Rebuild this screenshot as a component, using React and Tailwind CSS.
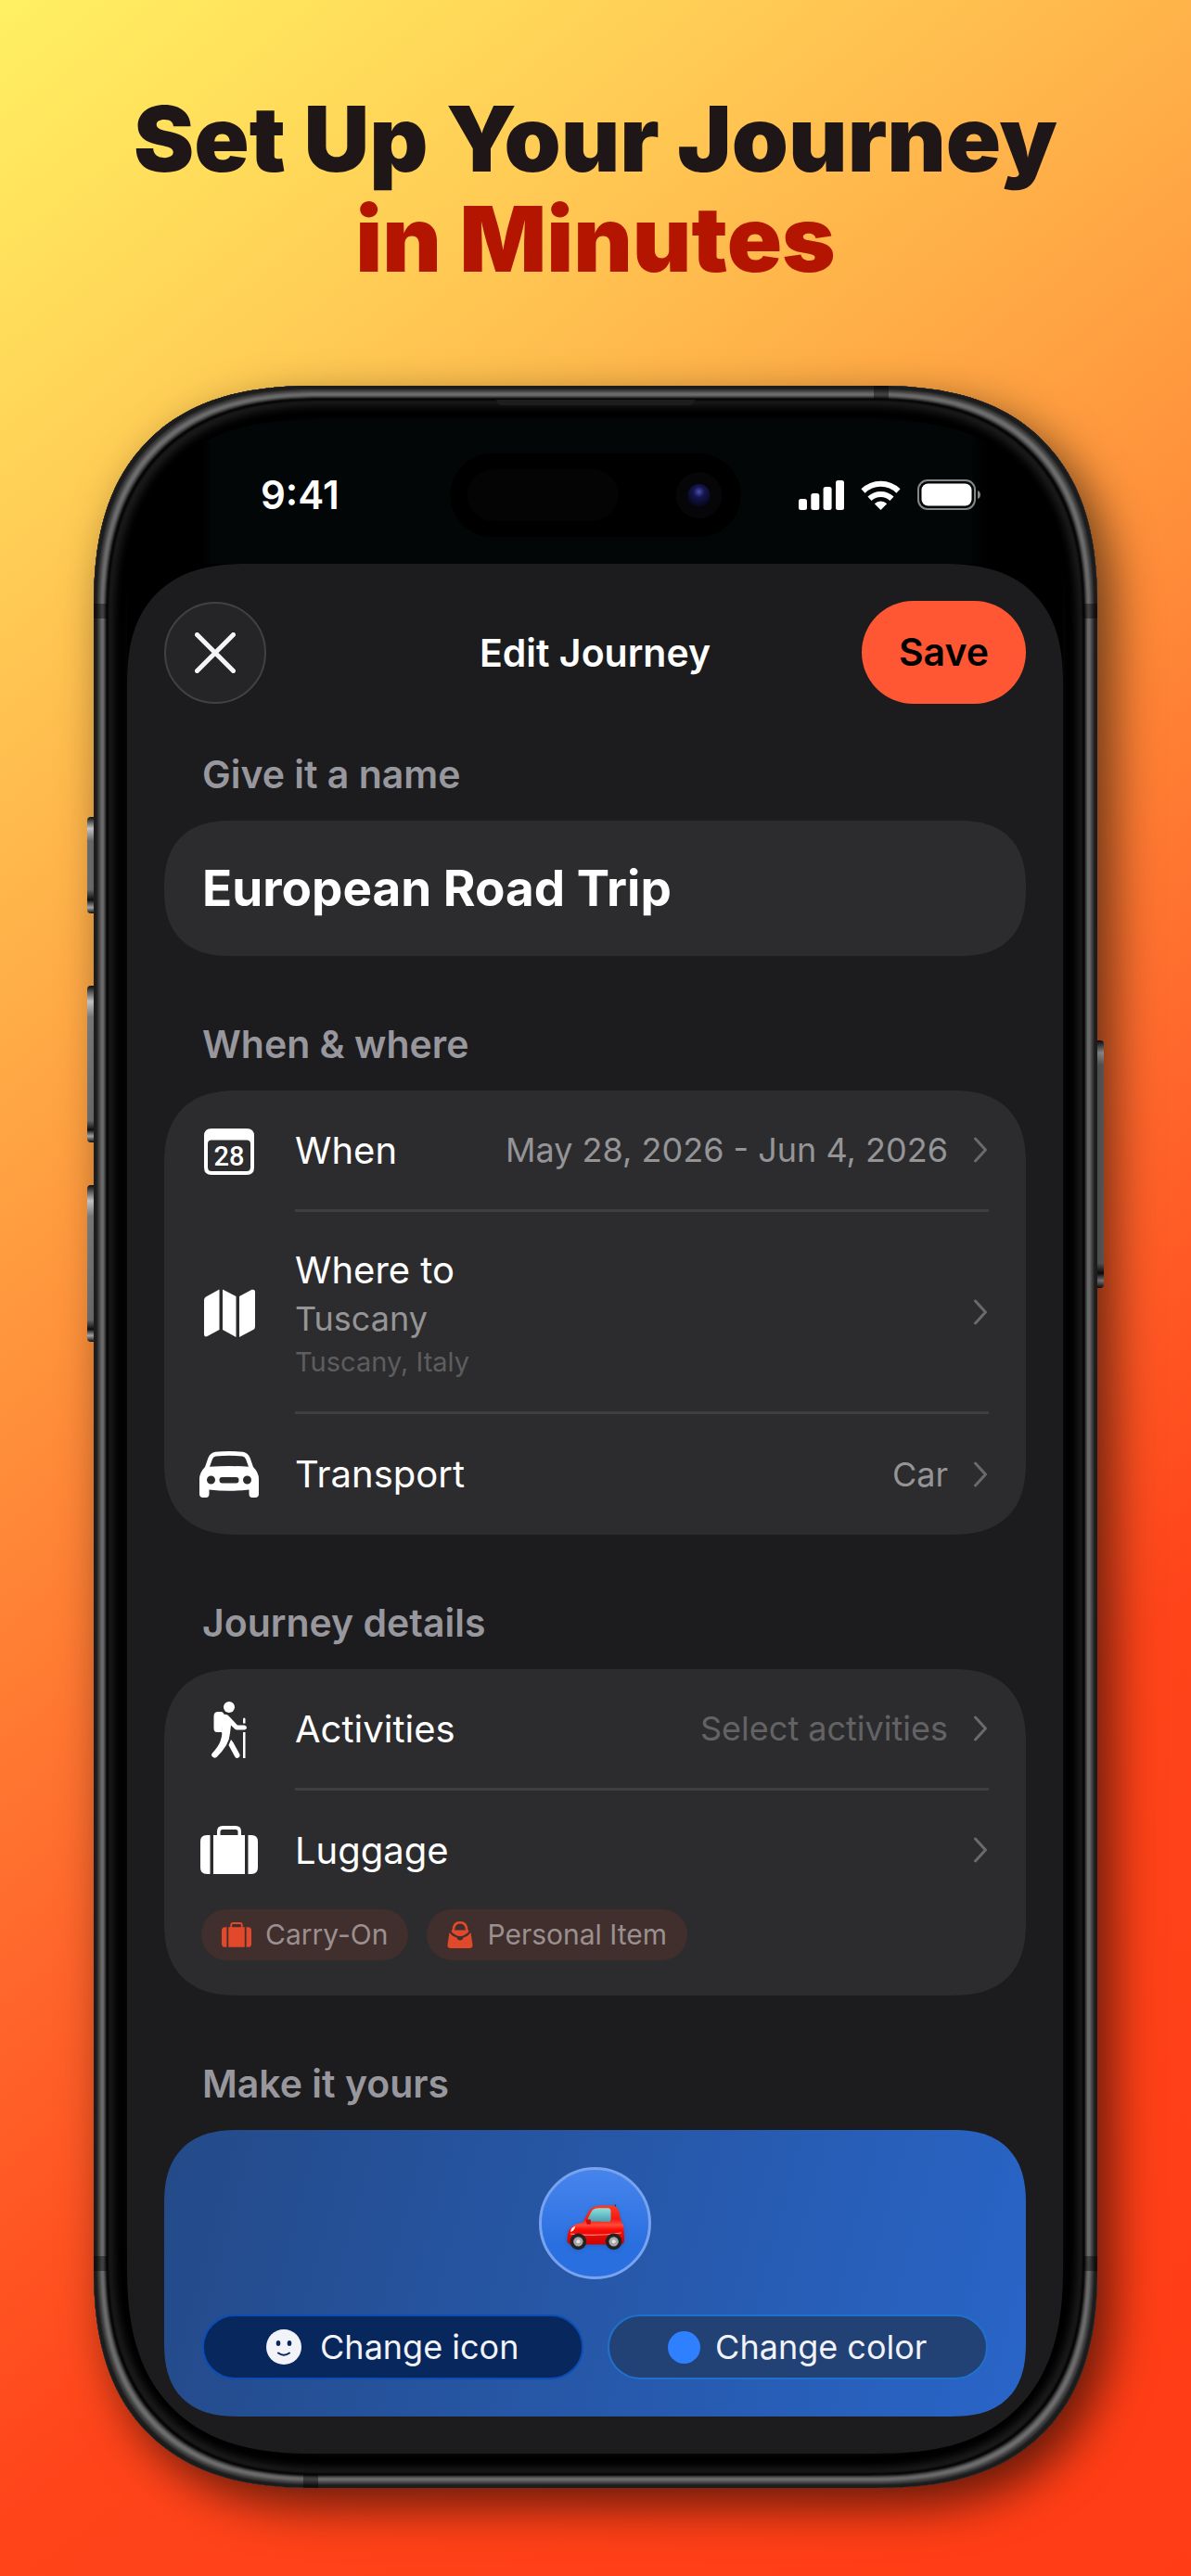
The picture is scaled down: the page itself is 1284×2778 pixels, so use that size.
const chevron = (
  <svg viewBox="0 0 16 28" className="h-7 w-4 shrink-0 text-[#6a6a6d]" fill="none" stroke="currentColor" strokeWidth="3" strokeLinecap="round" strokeLinejoin="round" aria-hidden="true">
    <path d="M1.5 2 L12.5 14 L1.5 26" />
  </svg>
);

function CalendarIcon() {
  return (
    <svg viewBox="0 0 54 50" className="w-[54px]" aria-hidden="true">
      <path fill="#fff" fillRule="evenodd" d="M8 0H46Q54 0 54 8V42Q54 50 46 50H8Q0 50 0 42V8Q0 0 8 0ZM8 12.500Q4 12.500 4 16.500V41.500Q4 46 8 46H46Q50 46 50 41.500V16.500Q50 12.500 46 12.500Z" />
      <text x="27" y="40" textAnchor="middle" fontSize="29" fontWeight="500" fill="#fff" className="font-[Roboto,sans-serif]">28</text>
    </svg>
  );
}

function MapIcon() {
  return (
    <svg viewBox="0 0 55 52" className="w-[55px]" fill="#fff" aria-hidden="true">
      <path d="M16.500 .5V44L3.500 51Q0 52.500 0 49V12Q0 9.500 2 8.500Z" />
      <path d="M20 .5L34.500 8V52L20 44Z" />
      <path d="M38 8L51.500 .8Q55 0 55 3.500V40.500Q55 43 53 44L38 52Z" />
    </svg>
  );
}

function CarIcon() {
  return (
    <svg viewBox="0 0 64 50" className="w-16" aria-hidden="true">
      <path fill="#fff" fillRule="evenodd" d="M17 .8Q32 -.6 47 .8Q52 1.500 54.500 7L58 17Q64 23 64 30V46Q64 50 60 50H57Q53.500 50 53.500 46V41.500Q32 44 10.500 41.500V46Q10.500 50 7 50H4Q0 50 0 46V30Q0 23 6 17L9.500 7Q12 1.500 17 .8ZM17.500 5.500Q15 5.800 14 8.500L11 16.800Q32 15.200 53 16.800L50 8.500Q49 5.800 46.500 5.500Q32 4 17.500 5.500ZM12.500 26.500A4.500 4.500 0 1 0 12.500 35.500A4.500 4.500 0 1 0 12.500 26.500ZM51.500 26.500A4.500 4.500 0 1 0 51.500 35.500A4.500 4.500 0 1 0 51.500 26.500ZM24.500 28Q21.500 28 21.500 31Q21.500 34.500 24.500 34.500H39.500Q42.500 34.500 42.500 31Q42.500 28 39.500 28Z" />
    </svg>
  );
}

function HikerIcon() {
  return (
    <svg viewBox="0 0 38 61" className="w-[38px]" aria-hidden="true">
      <g fill="#fff">
        <circle cx="19" cy="6" r="6" />
        <path d="M7 11H10Q13 11 14 15L11 33H6Q2.500 33 2.500 29V16Q2.500 11 7 11Z" />
        <path d="M13 14Q17 13 20 17L28 25.500H35.500Q38 26 38 28T35.500 30.500H27.500Q26 30.500 25 29.500L21 25.500L20 34Q19.500 41 16 47Q11 55 5.500 60Q3 61.500 1 59.500T1 55.500Q7 49 9.500 43Q12 36 11 33L12 16Z" />
        <path d="M21 41Q23 43 25 47L30.500 57Q31 60 28.500 60.800T25 59L18.500 47Z" />
        <path d="M34 19Q34 17.500 35.300 17.500T36.500 19V23.500H34ZM34 33H36.500V61H34Z" />
      </g>
    </svg>
  );
}

function SuitcaseIcon({ className }) {
  return (
    <svg viewBox="0 0 62 52" className={className} fill="currentColor" aria-hidden="true">
      <path d="M7 10H10.500V52H7Q0 52 0 45V17Q0 10 7 10Z" />
      <path d="M55 10H51.500V52H55Q62 52 62 45V17Q62 10 55 10Z" />
      <path fillRule="evenodd" d="M14 10H18V6Q18 0 24 0H38Q44 0 44 6V10H48V52H14ZM21.500 10H40.500V6.500Q40.500 4 38 4H24Q21.500 4 21.500 6.500Z" />
    </svg>
  );
}

function HandbagIcon() {
  return (
    <svg viewBox="0 0 28 29" className="w-7 text-[#e2492b]" fill="currentColor" aria-hidden="true">
      <path fillRule="evenodd" d="M5.500 9Q6 0 14 0T22.500 9L23.500 11Q19 16 14 16T4.500 11ZM8 9.500H20Q19.500 2.500 14 2.500T8 9.500Z" />
      <path d="M2.500 12Q6 16.500 10.500 17.500Q11 20.500 14 20.500T17.500 17.500Q22 16.500 25.500 12L27.500 25Q28 29 24 29H4Q0 29 .5 25Z" />
    </svg>
  );
}

function SmileIcon() {
  return (
    <svg viewBox="0 0 38 38" className="w-[38px]" aria-hidden="true">
      <circle cx="19" cy="19" r="19" fill="#f2f3f8" />
      <ellipse cx="13" cy="15" rx="2.300" ry="3" fill="#08265a" />
      <ellipse cx="25" cy="15" rx="2.300" ry="3" fill="#08265a" />
      <path d="M13 25.500Q19 30 25 25.500" stroke="#08265a" strokeWidth="2" strokeLinecap="round" fill="none" />
    </svg>
  );
}

function RedCar() {
  return (
    <svg viewBox="0 0 60 48" className="mt-2 w-[62px] drop-shadow-sm" aria-hidden="true">
      <defs>
        <linearGradient id="body" x1="0" y1="0" x2="0" y2="1">
          <stop offset="0" stopColor="#ff3b22" />
          <stop offset=".35" stopColor="#f5180f" />
          <stop offset=".5" stopColor="#ff4a3c" />
          <stop offset=".62" stopColor="#fb0d08" />
          <stop offset="1" stopColor="#c90303" />
        </linearGradient>
        <linearGradient id="glass" x1="0" y1="0" x2="0" y2="1">
          <stop offset="0" stopColor="#8fe0dc" />
          <stop offset="1" stopColor="#4a9db0" />
        </linearGradient>
      </defs>
      <path d="M49 5L51 .5" stroke="#333" strokeWidth="1.200" />
      <path fill="url(#body)" d="M4 25Q8 20 17 19L22 9Q26 2 34 1.500H47Q53 2 54.500 8L57 19Q60 21 59.500 27L60 34V39Q59 42 56 42H4Q0 41 .5 36Q1 28 4 25Z" />
      <path fill="url(#glass)" d="M21 18Q24 10 27 6Q29 4 33 4H43Q46 4 46 8V16Q46 18.500 44 18.500Z" />
      <path d="M4 31Q30 34 57 30" stroke="#ff8678" strokeWidth="1.200" fill="none" />
      <path d="M4 28Q5 24 9 23Q8 28 4 29Z" fill="#ffe9e4" />
      <path d="M20 16H25V21H21Z" fill="#c80a08" />
      <g>
        <circle cx="12" cy="39" r="8.500" fill="#222" />
        <circle cx="12" cy="39" r="5" fill="#a9a9a9" />
        <circle cx="12" cy="39" r="2" fill="#e4e4e4" />
        <circle cx="49" cy="39" r="8.500" fill="#222" />
        <circle cx="49" cy="39" r="5" fill="#a9a9a9" />
        <circle cx="49" cy="39" r="2" fill="#e4e4e4" />
      </g>
    </svg>
  );
}

function StatusBar() {
  return (
    <div className="relative flex h-[155px] items-center justify-between bg-[linear-gradient(90deg,#000_8%,#020606_9%,#020606_90%,#000_92%)] pr-[88px] pl-36">
      <div className="pt-1.5 text-[42px] leading-none font-semibold">9:41</div>
      <div className="absolute top-9 left-1/2 flex h-[90px] w-[313px] -translate-x-1/2 items-center justify-between rounded-full bg-black pr-5 pl-[18px]">
        <div className="h-14 w-[163px] rounded-full bg-[#040404]" />
        <div className="flex size-[50px] items-center justify-center rounded-full bg-[#060508]">
          <div className="size-6 rounded-full bg-[radial-gradient(circle_at_50%_35%,#4a4fa8_0%,#15164e_30%,#0a0b2a_65%,#05050f_100%)]" />
        </div>
      </div>
      <div className="flex items-center gap-[18px] pt-1.5">
        <svg viewBox="0 0 49 32" className="w-[49px]" fill="#fff" aria-label="Signal">
          <rect x="0" y="20" width="9" height="12" rx="2.500" />
          <rect x="13.300" y="14" width="9" height="18" rx="2.500" />
          <rect x="26.600" y="7" width="9" height="25" rx="2.500" />
          <rect x="40" y="0" width="9" height="32" rx="2.500" />
        </svg>
        <svg viewBox="0 0 43 32" className="w-[43px]" fill="none" stroke="#fff" strokeWidth="6" aria-label="Wi-Fi">
          <path d="M2.500 11.500A27 27 0 0 1 40.500 11.500" />
          <path d="M9.500 19.800A17.500 17.500 0 0 1 33.500 19.800" />
          <path d="M21.500 32L14.800 25.200A9.500 9.500 0 0 1 28.200 25.200Z" fill="#fff" stroke="none" />
        </svg>
        <svg viewBox="0 0 69 33" className="w-[69px]" aria-label="Battery">
          <rect x="1" y="1" width="61" height="31" rx="10" fill="none" stroke="#848687" strokeWidth="2" />
          <rect x="4.500" y="4.500" width="54" height="24" rx="7" fill="#fff" />
          <path d="M65 12Q68 13 68 16.500T65 21Z" fill="#848687" />
        </svg>
      </div>
    </div>
  );
}

function SectionTitle({ children, className = "" }) {
  return <h2 className={`px-[41px] text-[41px] leading-[48px] font-semibold text-[#98979e] ${className}`}>{children}</h2>;
}

function Card({ children, className = "" }) {
  return (
    <section className={`mt-[26px] rounded-[68px] supports-[corner-shape:squircle]:rounded-[80px] supports-[corner-shape:squircle]:[corner-shape:superellipse(1.3)] ${className}`}>
      {children}
    </section>
  );
}

function Row({ icon, label, value, muted, children, last, spacing = "pt-10 pb-[38px]" }) {
  return (
    <button type="button" className="flex w-full items-stretch pr-10 pl-[29px] text-left">
      <span className="flex w-[82px] shrink-0 items-center justify-center">{icon}</span>
      <span className={`ml-[30px] flex min-w-0 flex-1 items-center justify-between ${last ? "" : "border-b-3 border-[#3f3f42]"}`}>
        <span className={`flex flex-col text-[40px] leading-[50px] ${spacing}`}>
          {label}
          {children}
        </span>
        <span className="flex items-center gap-7">
          {value && <span className={muted ? "text-[36px] text-[#636365]" : "text-[36px] text-[#959597]"}>{value}</span>}
          {chevron}
        </span>
      </span>
    </button>
  );
}

function Chip({ icon, children }) {
  return (
    <span className="flex h-[55px] items-center gap-[15px] rounded-full bg-[#402f2d] px-[22px] text-[30px] text-[#9b908f]">
      {icon}
      {children}
    </span>
  );
}

function Phone({ children }) {
  return (
    <div className="relative mx-auto w-full max-w-[1082px]">
      <div className="absolute top-[465px] -left-[7px] h-[104px] w-2 rounded-l-sm bg-[linear-gradient(#111,#ddd_12%,#777_25%,#777_75%,#111_86%,#bbb_94%,#111)]" />
      <div className="absolute top-[647px] -left-[7px] h-[169px] w-2 rounded-l-sm bg-[linear-gradient(#111,#ddd_10%,#888_20%,#777_86%,#111_92%,#bbb_96%,#111)]" />
      <div className="absolute top-[862px] -left-[7px] h-[169px] w-2 rounded-l-sm bg-[linear-gradient(#111,#ddd_10%,#888_20%,#777_86%,#111_92%,#bbb_96%,#111)]" />
      <div className="absolute top-[706px] -right-[7px] h-[267px] w-2 rounded-r-sm bg-[linear-gradient(#111,#ddd_5%,#888_10%,#888_90%,#111_94%,#bbb_97%,#111)]" />
      <div className="relative rounded-[202px] bg-[#1c1c1c] py-[37px] pr-[37px] pl-9 shadow-[16px_20px_50px_rgba(0,0,0,0.6),inset_0_0_2px_4px_#1c1c1c,inset_0_0_3px_7px_#3c3c3c,inset_0_0_2px_11px_#707070,inset_0_0_2px_13px_#444,inset_0_0_2px_16px_#050505,inset_0_0_8px_22px_#1c1c1c,inset_0_0_8px_40px_#000] supports-[corner-shape:squircle]:rounded-[240px] supports-[corner-shape:squircle]:[corner-shape:superellipse(1.3)]">
        <div className="absolute top-[15px] left-1/2 h-1.5 w-[214px] -translate-x-1/2 rounded-b-md bg-[#1d1d1d]" />
        <div className="absolute top-0 right-[225px] h-[15px] w-4 bg-black/40" />
        <div className="absolute bottom-0 left-[226px] h-[15px] w-4 bg-black/40" />
        <div className="absolute top-[235px] left-0 h-4 w-[15px] bg-black/40" />
        <div className="absolute top-[235px] right-0 h-4 w-[15px] bg-black/40" />
        <div className="absolute bottom-[234px] left-0 h-4 w-[15px] bg-black/40" />
        <div className="absolute right-0 bottom-[234px] h-4 w-[15px] bg-black/40" />
        <div className="relative overflow-hidden rounded-[166px] bg-black supports-[corner-shape:squircle]:rounded-[200px] supports-[corner-shape:squircle]:[corner-shape:superellipse(1.3)]">{children}</div>
      </div>
    </div>
  );
}

export default function App() {
  return (
    <main className="min-h-screen overflow-hidden bg-[linear-gradient(142deg,#fff062_0%,#ffdb5a_10%,#ffc652_19%,#ff943c_39%,#ff662b_57%,#ff441a_72%,#ff3c15_100%)] px-[101px] pb-[95px] font-[Inter,'Liberation_Sans',sans-serif] text-white">
      <h1 className="-mx-12 flex h-[416px] flex-col items-center pt-24 text-[98px] leading-[108px] font-black whitespace-nowrap text-[#1e1617]">
        <span>Set Up Your Journey</span>
        <span className="text-[#b41500]">in Minutes</span>
      </h1>

      <Phone>
        <StatusBar />
        <div className="rounded-t-[112px] bg-[#1c1c1e] p-10 supports-[corner-shape:squircle]:rounded-t-[130px] supports-[corner-shape:squircle]:[corner-shape:superellipse(1.3)]">
          <header className="grid grid-cols-[1fr_auto_1fr] items-center">
            <button type="button" aria-label="Close" className="flex size-[110px] items-center justify-center rounded-full border-2 border-[#414144] bg-[#252527]">
              <svg viewBox="0 0 44 44" className="w-11" stroke="#f5f5f7" strokeWidth="5" strokeLinecap="round" aria-hidden="true">
                <path d="M2.500 2.500L41.500 41.500M41.500 2.500L2.500 41.500" />
              </svg>
            </button>
            <h2 className="text-[41px] leading-[48px] font-semibold">Edit Journey</h2>
            <button type="button" className="h-[111px] w-[177px] justify-self-end rounded-full bg-[#ff5733] text-[41px] font-semibold text-black">Save</button>
          </header>

          <form onSubmit={(e) => e.preventDefault()}>
            <SectionTitle className="mt-[52px]">
              <label htmlFor="journey-name">Give it a name</label>
            </SectionTitle>
            <input id="journey-name" type="text" defaultValue="European Road Trip" className="mt-[26px] h-[146px] w-full rounded-[68px] bg-[#2c2c2e] px-[41px] text-[53px] font-bold text-white outline-none supports-[corner-shape:squircle]:rounded-[73px] supports-[corner-shape:squircle]:[corner-shape:superellipse(1.3)]" />

            <SectionTitle className="mt-[71px]">When &amp; where</SectionTitle>
            <Card className="bg-[#2c2c2e]">
              <Row icon={<CalendarIcon />} label="When" value="May 28, 2026 - Jun 4, 2026" />
              <Row icon={<MapIcon />} label="Where to" spacing="pt-[38px] pb-[33px]">
                <span className="text-[36px] leading-[54px] text-[#959597]">Tuscany</span>
                <span className="text-[29px] leading-[40px] text-[#5d5d5f]">Tuscany, Italy</span>
              </Row>
              <Row icon={<CarIcon />} label="Transport" value="Car" spacing="py-10" last />
            </Card>

            <SectionTitle className="mt-[71px]">Journey details</SectionTitle>
            <Card className="bg-[#2c2c2e] pb-[38px]">
              <Row icon={<HikerIcon />} label="Activities" value="Select activities" muted />
              <Row icon={<SuitcaseIcon className="w-[62px] text-white" />} label="Luggage" last />
              <div className="flex gap-5 px-10">
                <Chip icon={<SuitcaseIcon className="w-8 text-[#e2492b]" />}>Carry-On</Chip>
                <Chip icon={<HandbagIcon />}>Personal Item</Chip>
              </div>
            </Card>

            <SectionTitle className="mt-[71px]">Make it yours</SectionTitle>
            <Card className="bg-[linear-gradient(105deg,#244a88,#2965c8)] px-[41px] py-10">
              <div className="mx-auto flex size-[121px] items-center justify-center rounded-full border-3 border-[#79a3ef] bg-[linear-gradient(#4785ec,#2a6fe0_70%)]">
                <RedCar />
              </div>
              <div className="mt-[38px] grid grid-cols-2 gap-[26px] text-[36px] text-[#f2f3f8]">
                <button type="button" className="flex h-[70px] items-center justify-center gap-5 rounded-full border-2 border-[#0b4db5] bg-[#08275c]">
                  <SmileIcon />
                  Change icon
                </button>
                <button type="button" className="flex h-[70px] items-center justify-center gap-4 rounded-full border-2 border-[#2070cd] bg-[#224275]">
                  <span className="size-[35px] rounded-full bg-[#2f80ff]" />
                  Change color
                </button>
              </div>
            </Card>
          </form>
        </div>
      </Phone>
    </main>
  );
}
